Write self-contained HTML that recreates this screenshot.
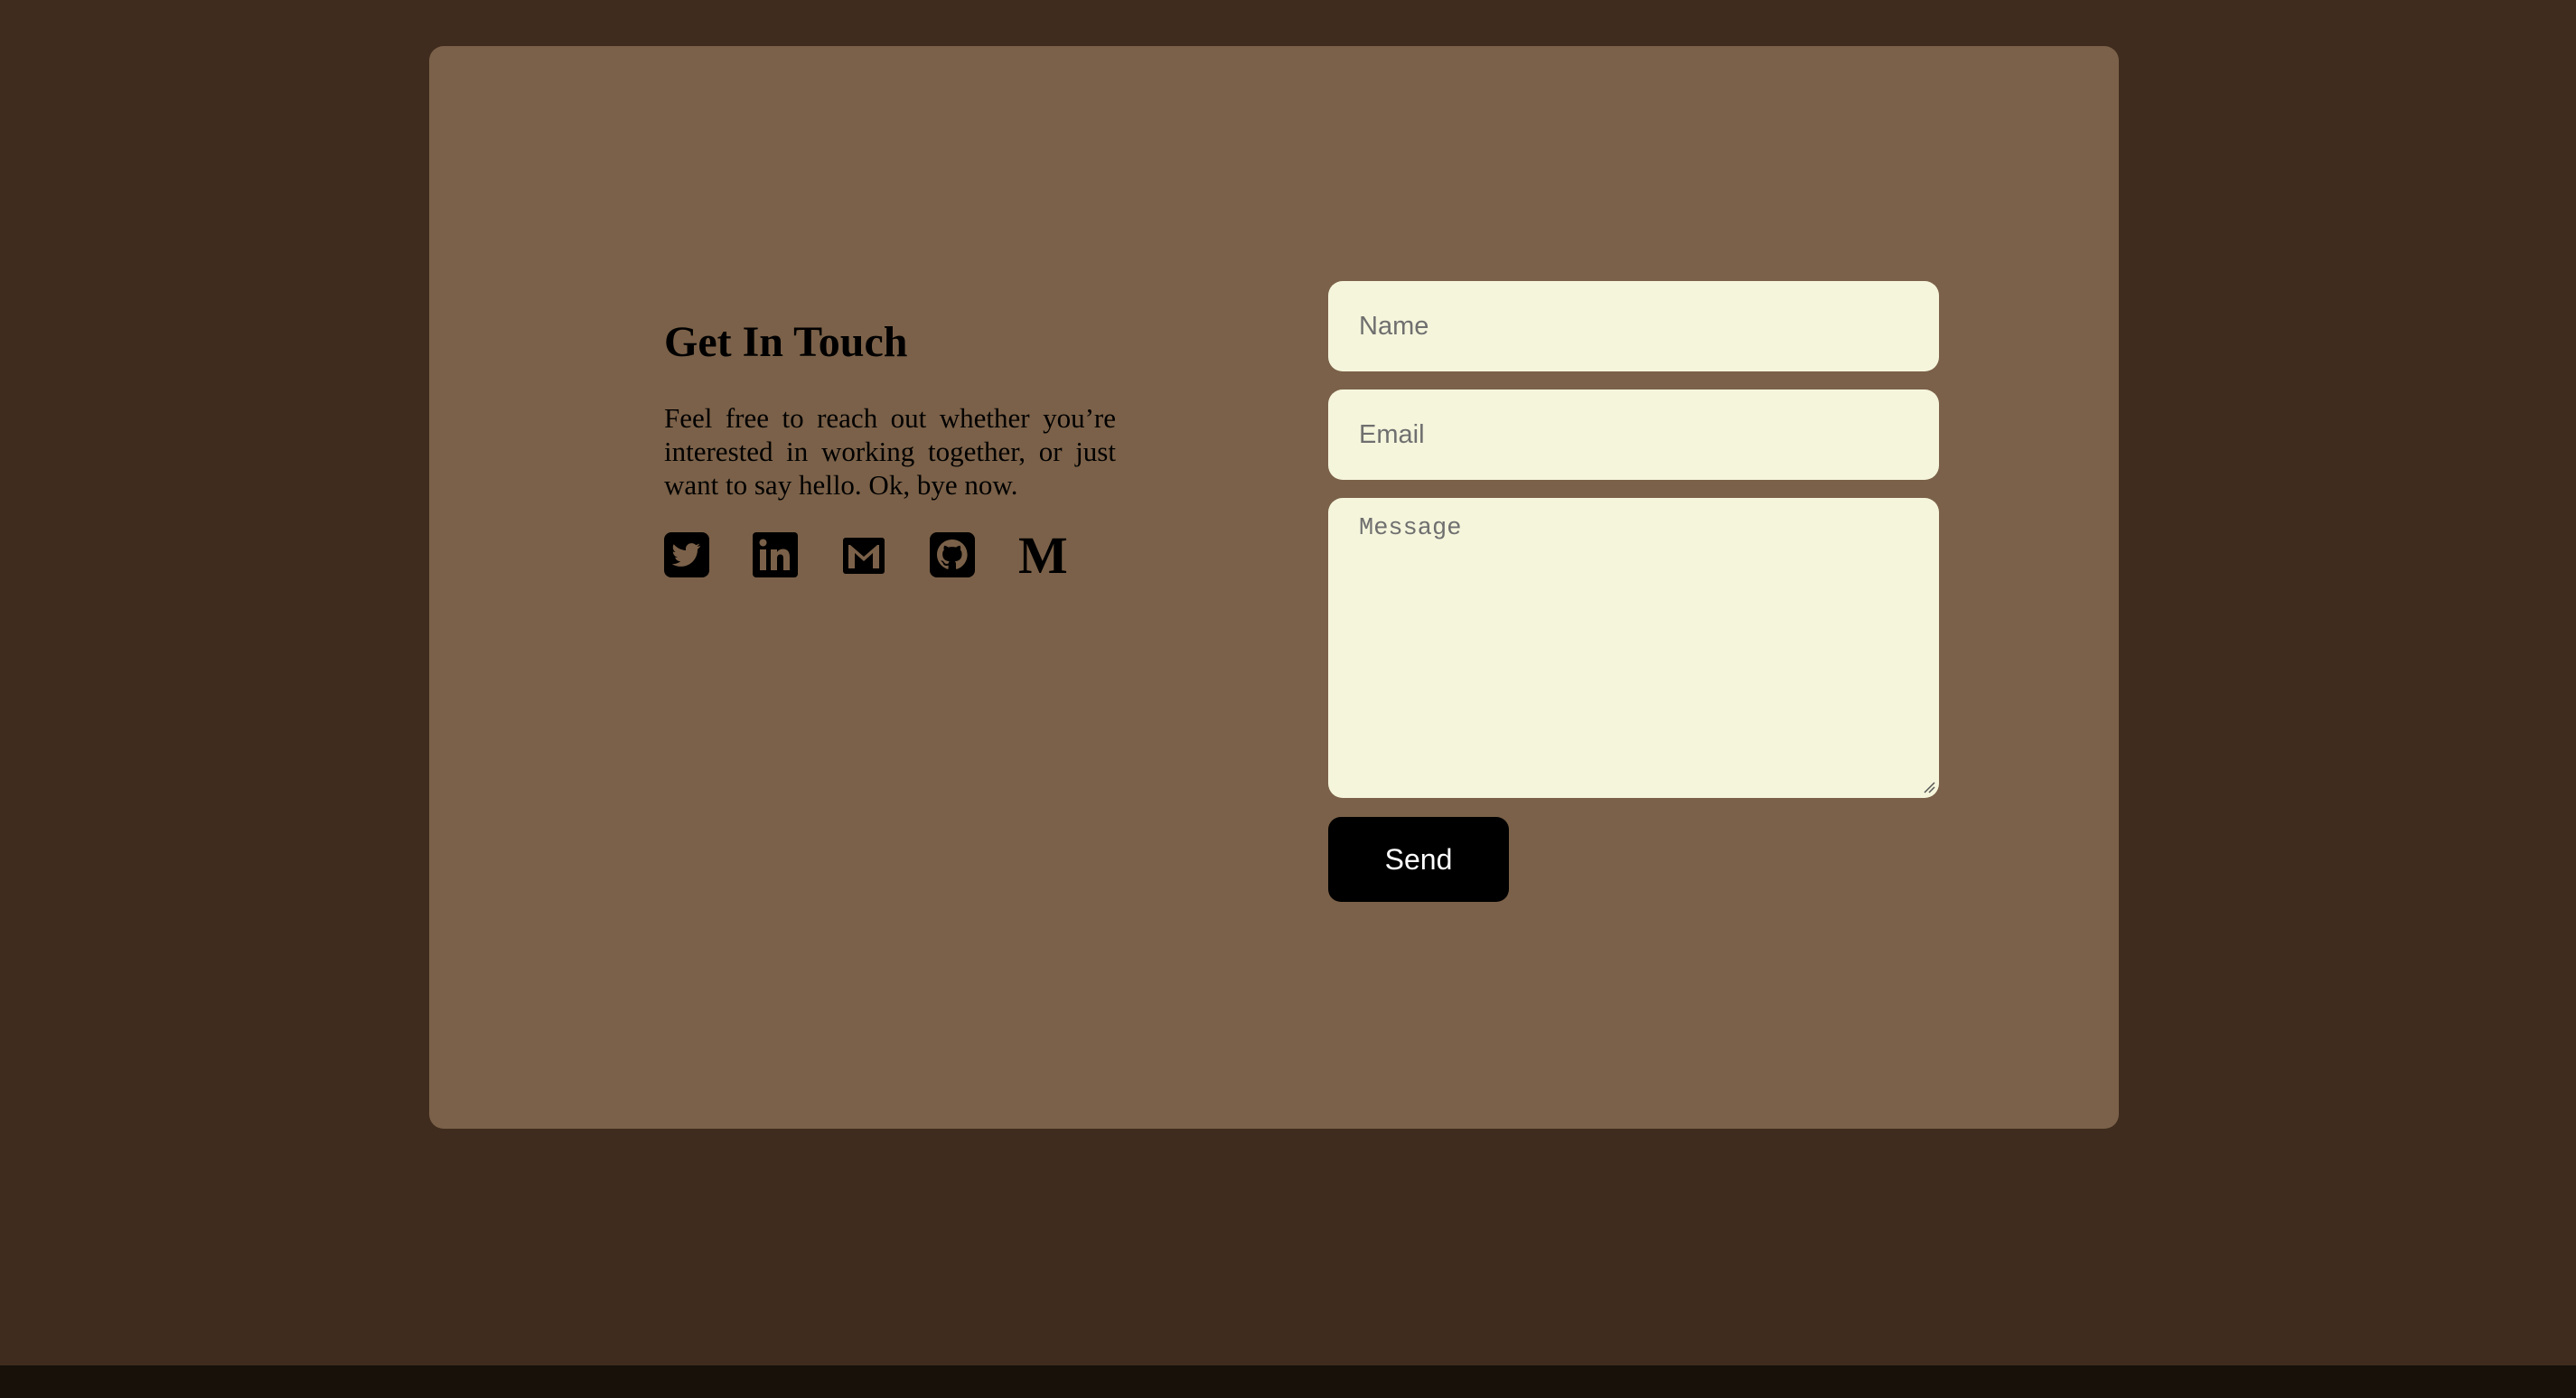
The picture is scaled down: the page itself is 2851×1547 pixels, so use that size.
<!DOCTYPE html>
<html><head><meta charset="utf-8"><style>
*{margin:0;padding:0;box-sizing:border-box}
html,body{width:2851px;height:1547px;overflow:hidden;background:#3f2c1e}
.card{position:absolute;left:475px;top:51px;width:1870px;height:1198px;background:#7b6149;border-radius:16px}
.foot{position:absolute;left:0;top:1511px;width:2851px;height:36px;background:#17110a}
h1{position:absolute;left:735px;top:355px;font:bold 48px/1 "Liberation Serif",serif;color:#000;white-space:nowrap}
p{position:absolute;left:735px;top:444px;width:500px;font:31px/37px "Liberation Serif",serif;text-align:justify;color:#000}
.ic{position:absolute;top:589px;width:50px;height:50px}
.in{position:absolute;left:1470px;width:676px;background:#f5f5dc;border-radius:16px;color:#6f6f6f;padding-left:34px}
.t{height:100px;font:29px/100px "Liberation Sans",sans-serif}
.msg{top:551px;height:332px;font:27px/1 "Liberation Mono",monospace;padding-top:21px}
.btn{position:absolute;left:1470px;top:904px;width:200px;height:94px;background:#000;border-radius:14px;color:#fff;font:32px/94px "Liberation Sans",sans-serif;text-align:center}
</style></head><body>
<div class="card"></div>
<div class="foot"></div>
<h1>Get In Touch</h1>
<p>Feel free to reach out whether you’re interested in working together, or just want to say hello. Ok, bye now.</p>
<svg class="ic" style="left:735px" viewBox="0 0 50 50"><rect width="50" height="50" rx="8"/><path fill="#7b6149" d="M40 15c-1.2.5-2.4.9-3.7 1 1.3-.8 2.3-2 2.8-3.5-1.2.7-2.6 1.3-4 1.6-1.2-1.3-2.9-2-4.7-2-3.6 0-6.5 2.9-6.5 6.5 0 .5 0 1 .2 1.5-5.4-.3-10.2-2.9-13.4-6.8-.6 1-.9 2.1-.9 3.3 0 2.3 1.1 4.3 2.9 5.4-1.1 0-2.1-.3-2.9-.8v.1c0 3.2 2.2 5.8 5.2 6.4-.5.2-1.1.2-1.7.2-.4 0-.8 0-1.2-.1.8 2.6 3.2 4.5 6.1 4.5-2.2 1.7-5 2.8-8.1 2.8-.5 0-1 0-1.6-.1 2.9 1.9 6.3 2.9 10 2.9 12 0 18.5-9.9 18.5-18.5v-.8c1.3-.9 2.4-2.1 3.2-3.4z"/></svg>
<svg class="ic" style="left:833px" viewBox="0 0 50 50"><rect width="50" height="50" rx="4"/><g fill="#7b6149"><rect x="8" y="19" width="7" height="23"/><circle cx="11.5" cy="11.5" r="4"/><path d="M20 19h7v3c1.2-2 3.5-3.5 6.5-3.5 5 0 7.5 3 7.5 9V42h-7V29c0-3-1-4.5-3.5-4.5S27 26.5 27 29v13h-7z"/></g></svg>
<svg class="ic" style="left:931px" viewBox="0 0 50 50"><rect x="2" y="6" width="46" height="40" rx="3"/><path fill="#7b6149" d="M8 14v26h7V23l10 9 10-9v17h7V14h-2L25 27 10 14z"/></svg>
<svg class="ic" style="left:1029px" viewBox="0 0 50 50"><rect width="50" height="50" rx="8"/><g transform="translate(8 8) scale(2.1)"><path fill="#7b6149" d="M8 0C3.58 0 0 3.58 0 8c0 3.54 2.29 6.53 5.47 7.59.4.07.55-.17.55-.38 0-.19-.01-.82-.01-1.49-2.01.37-2.53-.49-2.69-.94-.09-.23-.48-.94-.82-1.13-.28-.15-.68-.52-.01-.53.63-.01 1.08.58 1.23.82.72 1.21 1.87.87 2.33.66.07-.52.28-.87.51-1.07-1.78-.2-3.64-.89-3.64-3.95 0-.87.31-1.59.82-2.15-.08-.2-.36-1.02.08-2.12 0 0 .67-.21 2.2.82.64-.18 1.32-.27 2-.27.68 0 1.36.09 2 .27 1.53-1.04 2.2-.82 2.2-.82.44 1.1.16 1.92.08 2.12.51.56.82 1.27.82 2.15 0 3.07-1.87 3.75-3.65 3.95.29.25.54.73.54 1.48 0 1.07-.01 1.93-.01 2.2 0 .21.15.46.55.38A8.013 8.013 0 0016 8c0-4.42-3.58-8-8-8z"/></g></svg>
<div style="position:absolute;left:1127px;top:586px;font:bold 58px/1 'Liberation Serif',serif;color:#000">M</div>
<div class="in t" style="top:311px">Name</div>
<div class="in t" style="top:431px">Email</div>
<div class="in msg">Message</div>
<svg style="position:absolute;left:2128px;top:864px" width="14" height="14" viewBox="0 0 14 14"><path d="M2 13L13 2M7 13L13 7" stroke="#555" stroke-width="1.5"/></svg>
<div class="btn">Send</div>
</body></html>
